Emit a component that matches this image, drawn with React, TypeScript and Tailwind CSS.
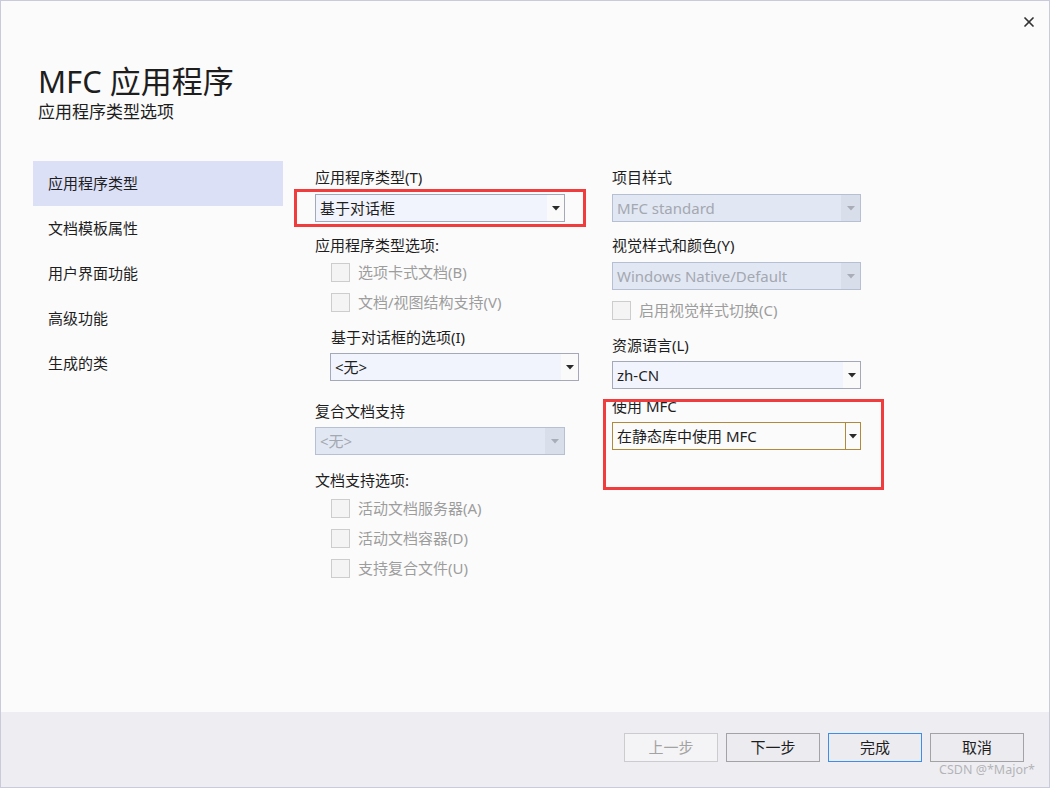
import { X } from "lucide-react";

const font = { fontFamily: '"Noto Sans", "Noto Sans CJK SC", sans-serif' };

const navItems = ["应用程序类型", "文档模板属性", "用户界面功能", "高级功能", "生成的类"];

function Arrow({ disabled }: { disabled?: boolean }) {
  return (
    <svg width="8" height="5" viewBox="0 0 8 5">
      <path d="M0 0h8L4 4.5z" fill={disabled ? "#a8adb8" : "#2a2a2a"} />
    </svg>
  );
}

function Select({
  value,
  disabled,
  focused,
  className,
}: {
  value: string;
  disabled?: boolean;
  focused?: boolean;
  className?: string;
}) {
  if (disabled) {
    return (
      <div
        className={`flex h-[28px] items-stretch border border-[#b7bfd2] bg-[#e1e7f3] ${className ?? ""}`}
      >
        <span className="flex flex-1 items-center pl-[4px] text-[15px] text-[#a4a8b0]">{value}</span>
        <span className="flex w-[19px] items-center justify-center bg-[#d8deea]">
          <Arrow disabled />
        </span>
      </div>
    );
  }
  if (focused) {
    return (
      <div className={`flex h-[28px] items-stretch border border-[#b08a3a] bg-[#fbfbfb] ${className ?? ""}`}>
        <span className="flex flex-1 items-center pl-[4px] text-[15px] text-[#1e1e1e]">{value}</span>
        <span className="flex w-[15px] items-center justify-center border-l border-[#b08a3a]">
          <Arrow />
        </span>
      </div>
    );
  }
  return (
    <div className={`flex h-[28px] items-stretch border border-[#a3a9b8] bg-[#f1f4fc] ${className ?? ""}`}>
      <span className="flex flex-1 items-center pl-[4px] text-[15px] text-[#1e1e1e]">{value}</span>
      <span className="flex w-[17px] items-center justify-center bg-[#fafafa]">
        <Arrow />
      </span>
    </div>
  );
}

function Check({ label, className }: { label: string; className?: string }) {
  return (
    <div className={`flex h-[30px] items-center ${className ?? ""}`}>
      <span className="h-[19px] w-[19px] border border-[#cdcdcd] bg-[#f4f4f4]" />
      <span className="ml-[8px] text-[15px] text-[#9d9d9d]">{label}</span>
    </div>
  );
}

function Label({ children, className }: { children: React.ReactNode; className?: string }) {
  return <div className={`h-[20px] text-[15px] leading-[20px] text-[#1e1e1e] ${className ?? ""}`}>{children}</div>;
}

function Button({ children, disabled, primary }: { children: string; disabled?: boolean; primary?: boolean }) {
  const cls = disabled
    ? "border-[#cbcbd0] bg-[#f4f4f6] text-[#a3a3a3]"
    : primary
      ? "border-[#3d8ee8] bg-[#ececf0] text-[#1e1e1e]"
      : "border-[#a3a3a6] bg-[#ececf0] text-[#1e1e1e]";
  return (
    <button className={`flex h-[29px] w-[94px] items-center justify-center border text-[15px] ${cls}`}>
      {children}
    </button>
  );
}

export default function App() {
  return (
    <div
      className="relative flex h-[788px] w-[1050px] flex-col border border-[#c9cbdc] bg-[#fbfbfb]"
      style={font}
    >
      <div className="flex h-[40px] justify-end pr-[12px] pt-[13px]">
        <X size={16} strokeWidth={2.6} color="#333" />
      </div>
      <div className="pl-[37px] pt-[21px]">
        <h1 className="text-[31px] leading-[38px] text-[#1e1e1e]">MFC 应用程序</h1>
        <p className="text-[17px] leading-[24px] text-[#1e1e1e]">应用程序类型选项</p>
      </div>

      <div className="mt-[37px] flex flex-1">
        <nav className="ml-[32px] w-[250px]">
          {navItems.map((item, i) => (
            <div
              key={item}
              className={`flex h-[45px] items-center pl-[15px] text-[15px] text-[#1e1e1e] ${i === 0 ? "bg-[#dbe0f7]" : ""}`}
            >
              {item}
            </div>
          ))}
        </nav>

        <div className="ml-[32px] flex w-[264px] flex-col pt-[6px]">
          <Label>应用程序类型(T)</Label>
          <Select value="基于对话框" className="mt-[7px] w-[250px]" />
          <Label className="mt-[13px]">应用程序类型选项:</Label>
          <div className="mt-[2px] pl-[16px]">
            <Check label="选项卡式文档(B)" />
            <Check label="文档/视图结构支持(V)" />
          </div>
          <Label className="ml-[16px] mt-[10px]">基于对话框的选项(I)</Label>
          <Select value="<无>" className="ml-[15px] mt-[6px] w-[249px]" />
          <Label className="mt-[20px]">复合文档支持</Label>
          <Select value="<无>" disabled className="mt-[6px] w-[250px]" />
          <Label className="mt-[15px]">文档支持选项:</Label>
          <div className="mt-[3px] pl-[16px]">
            <Check label="活动文档服务器(A)" />
            <Check label="活动文档容器(D)" />
            <Check label="支持复合文件(U)" />
          </div>
        </div>

        <div className="ml-[33px] flex w-[249px] flex-col pt-[6px]">
          <Label>项目样式</Label>
          <Select value="MFC standard" disabled className="mt-[7px]" />
          <Label className="mt-[13px]">视觉样式和颜色(Y)</Label>
          <Select value="Windows Native/Default" disabled className="mt-[7px]" />
          <Check label="启用视觉样式切换(C)" className="mt-[5px]" />
          <Label className="mt-[10px]">资源语言(L)</Label>
          <Select value="zh-CN" className="mt-[6px]" />
          <Label className="mt-[7px]">使用 MFC</Label>
          <Select value="在静态库中使用 MFC" focused className="mt-[6px]" />
        </div>
      </div>

      <footer className="relative flex h-[75px] justify-end gap-[8px] bg-[#eeeef2] pr-[25px] pt-[21px]">
        <Button disabled>上一步</Button>
        <Button>下一步</Button>
        <Button primary>完成</Button>
        <Button>取消</Button>
        <span className="absolute bottom-[7px] right-[14px] text-[12.5px] text-[#b4b4b8]">CSDN @*Major*</span>
      </footer>

      <div className="pointer-events-none absolute left-[293px] top-[188px] h-[38px] w-[292px] border-[3px] border-[#f03c3c]" />
      <div className="pointer-events-none absolute left-[602px] top-[398px] h-[91px] w-[281px] border-[3px] border-[#f03c3c]" />
    </div>
  );
}
